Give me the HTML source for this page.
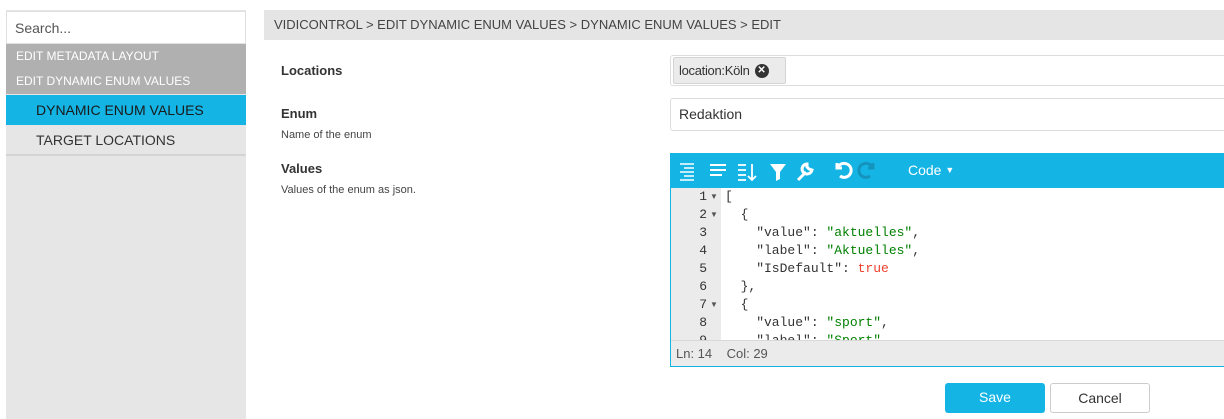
<!DOCTYPE html>
<html><head><meta charset="utf-8"><style>
*{box-sizing:border-box;margin:0;padding:0}
body{width:1224px;height:419px;overflow:hidden;background:#fff;font-family:"Liberation Sans",sans-serif;position:relative;color:#333}
.abs{position:absolute}
.side{left:6px;top:10px;width:240px;height:409px;background:#e6e6e6}
.search{left:6px;top:11px;width:240px;height:33px;background:#fff;border:1px solid #e0e0e0;font-size:14px;color:#555;padding:8px 8px}
.grp{left:6px;top:44px;width:240px;height:50px;background:#b0b0b0;color:#fff;font-size:12px}
.grp div{height:25px;line-height:25px;padding-left:10px}
.act{left:6px;top:95px;width:240px;height:30px;background:#14b4e4;color:#1a1a1a;font-size:14px;line-height:30px;padding-left:30px}
.tl{left:6px;top:125px;width:240px;height:31px;border-bottom:2px solid #d4d4d4;font-size:14px;line-height:30px;padding-left:30px;color:#333}
.crumb{left:264px;top:10px;width:960px;height:30px;background:#e5e5e5;font-size:13px;line-height:30px;padding-left:10px;color:#444}
.lbl{font-size:13px;font-weight:bold;color:#333;left:281px}
.sub{font-size:11px;color:#444;left:281px}
.inp{left:670px;width:560px;border:1px solid #ddd;border-radius:3px;background:#fff}
.code{font-family:"Liberation Mono",monospace;font-size:13px;line-height:18px}
.btn{top:383px;height:30px;width:100px;border-radius:3px;font-size:14px;text-align:center;line-height:29px}
</style></head><body>
<div class="abs side"></div>
<div class="abs search">Search...</div>
<div class="abs grp"><div>EDIT METADATA LAYOUT</div><div>EDIT DYNAMIC ENUM VALUES</div></div>
<div class="abs act">DYNAMIC ENUM VALUES</div>
<div class="abs tl">TARGET LOCATIONS</div>
<div class="abs crumb">VIDICONTROL &gt; EDIT DYNAMIC ENUM VALUES &gt; DYNAMIC ENUM VALUES &gt; EDIT</div>
<div class="abs lbl" style="top:63px">Locations</div>
<div class="abs lbl" style="top:106px">Enum</div>
<div class="abs sub" style="top:129px">Name of the enum</div>
<div class="abs lbl" style="top:161px">Values</div>
<div class="abs sub" style="top:184px">Values of the enum as json.</div>
<div class="abs inp" style="top:55px;height:31px"></div>
<div class="abs" style="left:673px;top:57px;height:27px;width:113px;background:#ebebeb;border:1px solid #d4d4d4;border-radius:2px;font-size:13px;padding-left:5px;color:#333;white-space:nowrap;display:flex;align-items:center;gap:5px"><span style="letter-spacing:-0.3px">location:Köln</span><span style="display:block;width:14px;height:14px;border-radius:50%;background:#333;color:#fff;font-size:10px;line-height:14px;text-align:center;font-weight:bold">✕</span></div>
<div class="abs inp" style="top:98px;height:33px;font-size:14px;line-height:31px;padding-left:8px;color:#333">Redaktion</div>
<div class="abs" style="left:670px;top:153px;width:560px;height:214px;border:1px solid #14b4e4;background:#fff"></div>
<div class="abs" style="left:670px;top:153px;width:560px;height:35px;background:#14b4e4"></div>
<svg class="abs" style="left:676px;top:160px" width="290" height="22" viewBox="0 0 290 22" fill="none" stroke="#fff" stroke-width="2">
<path d="M4 4h14M8 8h10M4 12h14M8 16h10M4 20h14" stroke-width="1.6"/>
<path d="M34 5h16M34 10h16M34 15h12" stroke-width="2"/>
<path d="M62 5h8M62 10h8M62 15h8M62 20h8M76 4v16M72 16l4 4 4-4" stroke-width="1.8"/>
<path d="M94 4h16l-6 8v7l-4 2v-9z" fill="#fff" stroke="none"/>
<path d="M122 20l8-8M131 4a5 5 0 1 0 5 6l-3-1-2-2z" stroke-width="3"/>
<path d="M164 16a7 7 0 1 0-2-9M161 3v5h5" stroke-width="3"/>
<path d="M194 16a7 7 0 1 1 2-9M197 3v5h-5" stroke="#1494bd" stroke-width="3"/>
</svg>
<div class="abs" style="left:908px;top:162px;font-size:14px;color:#fff">Code <span style="font-size:9px;vertical-align:2px">▼</span></div>
<div class="abs" style="left:671px;top:188px;width:50px;height:152px;background:#ebebeb"></div>
<div class="abs code" style="left:671px;top:188px;width:36px;text-align:right;color:#333">1<br>2<br>3<br>4<br>5<br>6<br>7<br>8<br>9</div>
<div class="abs" style="left:710px;top:188px;font-size:8px;color:#555;line-height:18px">▼<br>▼<br><br><br><br><br>▼</div>
<div class="abs code" style="left:725px;top:188px;height:152px;overflow:hidden;white-space:pre;color:#333">[
  {
    "value": <span style="color:#008000">"aktuelles"</span>,
    "label": <span style="color:#008000">"Aktuelles"</span>,
    "IsDefault": <span style="color:#ee422e">true</span>
  },
  {
    "value": <span style="color:#008000">"sport"</span>,
    "label": <span style="color:#008000">"Sport"</span>,</div>
<div class="abs" style="left:671px;top:340px;width:560px;height:26px;background:#ebebeb;border-top:1px solid #d8d8d8;font-size:13px;line-height:25px;padding-left:5px;color:#555">Ln: 14 &nbsp;&nbsp; Col: 29</div>
<div class="abs btn" style="left:945px;background:#14b4e4;color:#fff">Save</div>
<div class="abs btn" style="left:1050px;border:1px solid #ccc;background:#fff;color:#333">Cancel</div>
</body></html>
